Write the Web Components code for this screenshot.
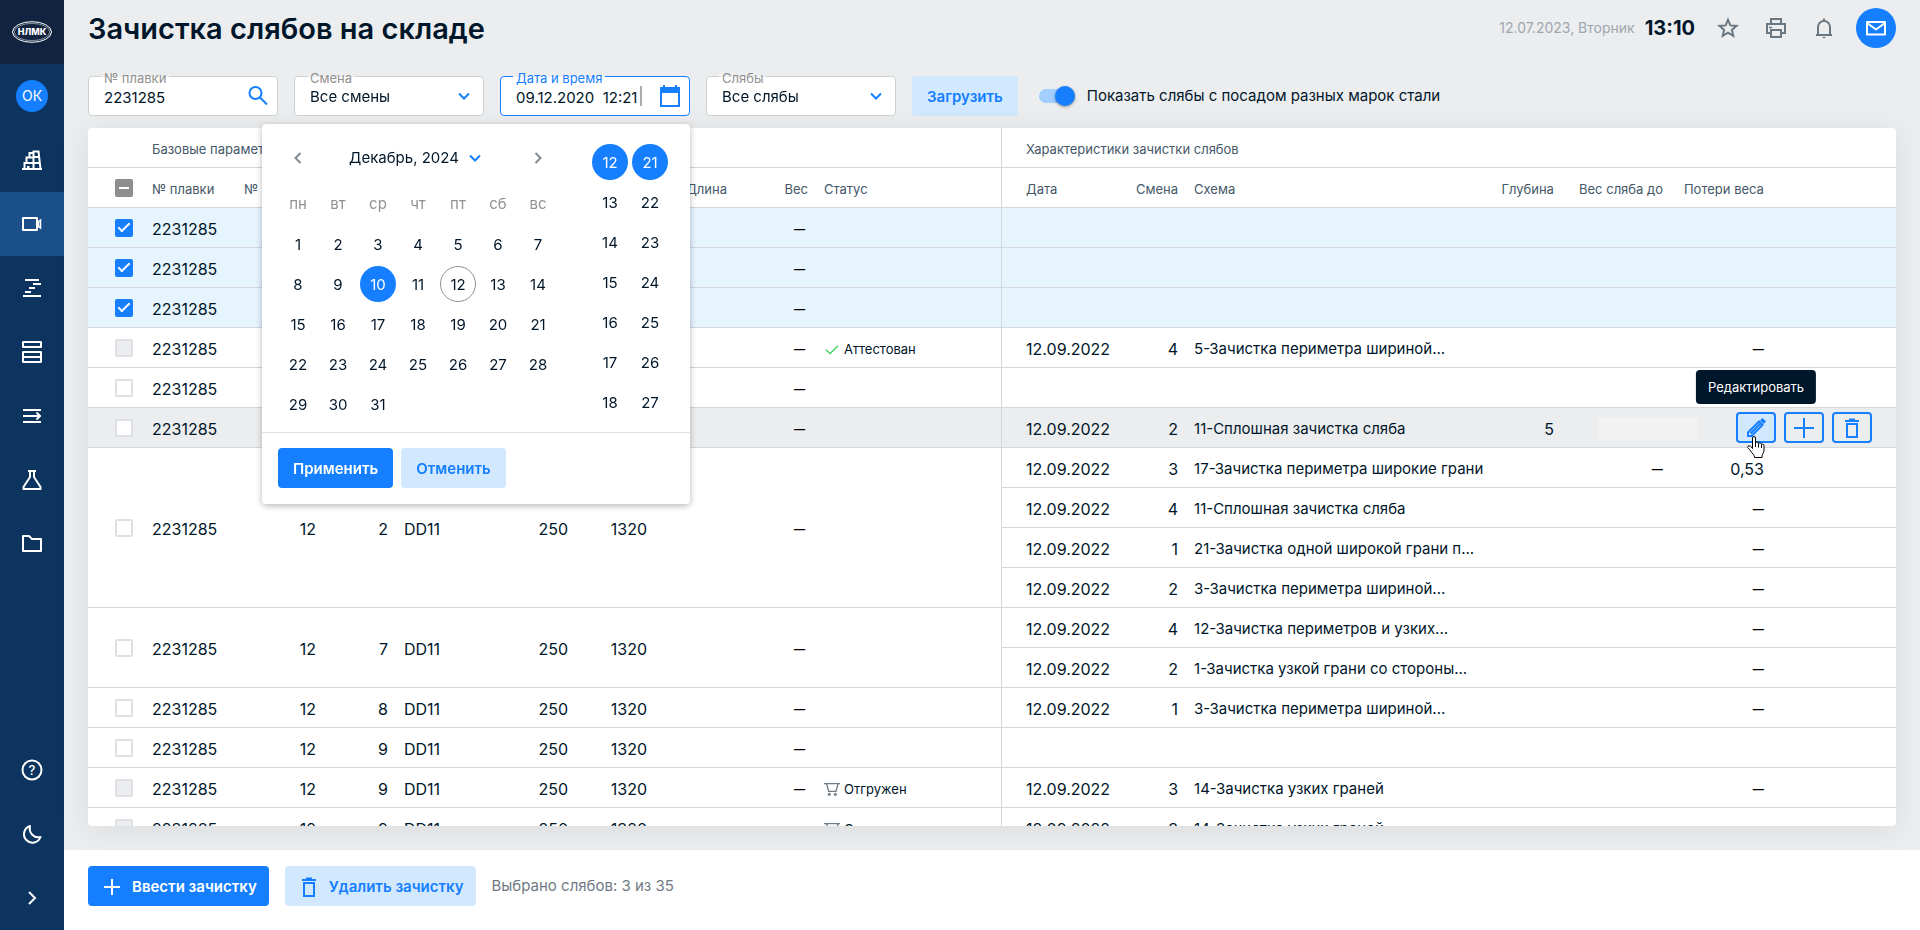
<!DOCTYPE html>
<html lang="ru">
<head>
<meta charset="utf-8">
<meta name="viewport" content="width=device-width, initial-scale=1">
<title>Зачистка слябов на складе</title>
<style>
  :root {
    --ink: #00162a;
    --muted: #919191;
    --head: #455868;
    --blue: #157fff;
    --blue-soft: #d1e8ff;
    --page: #ecedef;
    --line: #d5d8da;
    --sans: Inter, "Noto Sans", sans-serif;
  }
  body {
    margin: 0;
    background: var(--page);
    color: var(--ink);
    font: 15px/20px var(--sans);
  }
</style>
</head>
<body>
<app-shell>
  <nav-rail slot="nav"></nav-rail>
  <page-header heading="Зачистка слябов на складе" date="12.07.2023, Вторник" time="13:10"></page-header>
  <filter-bar></filter-bar>
  <slab-table></slab-table>
  <action-bar slot="footer">
    <ui-button icon="plus">Ввести зачистку</ui-button>
    <ui-button icon="trash" kind="soft">Удалить зачистку</ui-button>
    <span slot="note">Выбрано слябов: 3 из 35</span>
  </action-bar>
</app-shell>

<script>
const ICONS = {
  star: '<path d="M12 3.8l2.4 5.6 6.1.5-4.6 4 1.4 6L12 16.7l-5.3 3.2 1.4-6-4.6-4 6.1-.5z" stroke-linejoin="miter"/>',
  print: '<path d="M7 8V3h10v5M6.500 17H3V8h18v9h-3.500M7 14h10v7H7z"/><path d="M5 11.500h3" stroke-width="1.500"/>',
  bell: '<path d="M4 19h16M6 19v-8a6 6 0 0 1 12 0v8M12 5V2.500"/><path d="M10 21h4l-2 1.500z" fill="currentColor" stroke="none"/>',
  mail: '<path d="M3 6h18v12.500H3zM3 7l9 6.500L21 7" stroke-linejoin="round"/>',
  search: '<circle cx="9.500" cy="9" r="6"/><path d="M14 13.500l7 7"/>',
  down: '<path d="M7 9.500l5 5 5-5"/>',
  left: '<path d="M14.500 7l-5 5 5 5"/>',
  right: '<path d="M9.500 7l5 5-5 5"/>',
  expand: '<path d="M9 6l6 6-6 6"/>',
  calendar: '<path d="M3 6h18v16H3z"/><path d="M2 3h20v6H2zM5 1h2v3H5zM17 1h2v3h-2z" fill="currentColor" stroke="none"/>',
  plus: '<path d="M12 4v16M4 12h16"/>',
  cross: '<path d="M12 2v20M2 12h20"/>',
  trash: '<path d="M7 8h10v13H7zM5 5h14M9 3.500h6"/>',
  pencil: '<path d="M4 20v-3.500L15 5.500l3.500 3.500L7.500 20zM6.500 17.500l10-10"/><path d="M16 4.500L18.500 2 22 5.500 19.500 8z" fill="currentColor" stroke="none"/>',
  check: '<path d="M3 13l6 6L21 7"/>',
  cart: '<path d="M0 4h24M4 4.500L7 15.500h11L21 4.500"/><circle cx="8" cy="20" r="1.500"/><circle cx="17" cy="20" r="1.500"/>',
  plant: '<path d="M2 21h20M4.500 21v-6h9M6.500 15V9.500h7M9.500 9.500V5h4M13.500 21V3.500h5L20.500 21M13.500 9h6M13.500 15h6.500"/><path d="M7 18h2.500v3H7z" fill="currentColor" stroke="none"/>',
  camera: '<path d="M3 6h14v12H3z" stroke-linejoin="round"/><path d="M18.500 9.500l2-1.500v8l-2-1.500z" stroke-width="1.500"/>',
  gantt: '<path d="M5 4h14M13 8h8M9 12h6M5 16h6M3 20h18"/>',
  layers: '<path d="M3 2h18v5H3zM3 12h18v10H3zM3 17h18" stroke-linejoin="round"/>',
  flow: '<path d="M3 6h18M3 12h17M3 18h18M16.500 8.500L20 12l-3.500 3.500"/>',
  flask: '<path d="M8 3h8M10 3v6L3.500 19v2h17v-2L14 9V3" stroke-linejoin="round"/>',
  folder: '<path d="M3 4h6l3 3h9v12H3z" stroke-linejoin="round"/>',
  help: '<circle cx="12" cy="12" r="9.500"/><text x="12" y="16.500" text-anchor="middle" font-size="13" font-family="Inter, sans-serif" font-weight="500" fill="currentColor" stroke="none">?</text>',
  moon: '<path d="M10 4a8.500 8.500 0 1 0 10.500 11C14 16.500 8.500 11 10 4z" stroke-linejoin="round"/>'
};

function define(name, markup, setup) {
  const template = document.createElement('template');
  customElements.define(name, class extends HTMLElement {
    connectedCallback() {
      if (this.shadowRoot) return;
      const root = this.attachShadow({ mode: 'open' });
      template.innerHTML = typeof markup === 'function' ? markup(this) : markup;
      root.append(template.content.cloneNode(true));
      if (setup) setup(root, this);
    }
  });
}

define('ui-icon', el => `
  <style>
    :host { display: inline-flex; width: 24px; height: 24px; flex: none; }
    svg { width: 100%; height: 100%; fill: none; stroke: currentColor; stroke-width: 2; }
  </style>
  <svg viewBox="0 0 24 24" aria-hidden="true">${ICONS[el.getAttribute('name')]}</svg>`);

define('ui-button', el => `
  <style>
    :host { display: inline-flex; }
    button {
      display: flex; align-items: center; gap: 8px; height: 40px; padding: 1px 15px 0;
      border: 0; border-radius: 4px; background: var(--blue); color: #fff;
      font: 600 15px/20px var(--sans); white-space: nowrap; cursor: pointer;
    }
    button.soft { background: var(--blue-soft); color: var(--blue); }
    button.with-icon { padding: 1px 12px 0; }
  </style>
  <button type="button" class="${el.getAttribute('kind') || ''} ${el.hasAttribute('icon') ? 'with-icon' : ''}">
    ${el.hasAttribute('icon') ? `<ui-icon name="${el.getAttribute('icon')}"></ui-icon>` : ''}<slot></slot>
  </button>`);

define('app-shell', `
  <style>
    :host { display: grid; grid-template: "nav main" minmax(0, 1fr) "nav foot" auto / 64px minmax(0, 1fr); height: 100vh; }
    .nav { grid-area: nav; display: grid; }
    main { grid-area: main; display: flex; flex-direction: column; min-height: 0; padding: 0 24px 24px; }
    .foot { grid-area: foot; }
  </style>
  <div class="nav"><slot name="nav"></slot></div>
  <main><slot></slot></main>
  <div class="foot"><slot name="footer"></slot></div>`);

define('nav-rail', `
  <style>
    :host { display: flex; flex-direction: column; background: #0c345f; color: #fff; }
    nav { display: flex; flex-direction: column; flex: 1; }
    a, .logo, .user { display: flex; align-items: center; justify-content: center; height: 64px; color: inherit; text-decoration: none; }
    .logo { background: #12233f; }
    .user span {
      display: grid; place-items: center; width: 32px; height: 32px;
      border-radius: 50%; background: var(--blue); font-size: 14px;
    }
    .active { background: #1a4f8a; }
    .gap { flex: 1; }
  </style>
  <a class="logo" href="#" aria-label="НЛМК">
    <svg width="40" height="22" viewBox="0 0 40 22" fill="none" stroke="#fff">
      <ellipse cx="20" cy="11" rx="19.500" ry="10.300"/>
      <ellipse cx="20" cy="11" rx="17.800" ry="8.600" stroke-width=".5"/>
      <text x="20" y="14" text-anchor="middle" font-family="Inter, sans-serif" font-weight="800" font-size="9" fill="#fff" stroke="none">НЛМК</text>
    </svg>
  </a>
  <div class="user"><span>ОК</span></div>
  <nav aria-label="Разделы">
    <a href="#" aria-label="Производство"><ui-icon name="plant"></ui-icon></a>
    <a href="#" aria-label="Видео" class="active"><ui-icon name="camera"></ui-icon></a>
    <a href="#" aria-label="График"><ui-icon name="gantt"></ui-icon></a>
    <a href="#" aria-label="Склад"><ui-icon name="layers"></ui-icon></a>
    <a href="#" aria-label="Маршруты"><ui-icon name="flow"></ui-icon></a>
    <a href="#" aria-label="Лаборатория"><ui-icon name="flask"></ui-icon></a>
    <a href="#" aria-label="Документы"><ui-icon name="folder"></ui-icon></a>
    <span class="gap"></span>
    <a href="#" aria-label="Справка"><ui-icon name="help"></ui-icon></a>
    <a href="#" aria-label="Тёмная тема"><ui-icon name="moon"></ui-icon></a>
    <a href="#" aria-label="Развернуть"><ui-icon name="expand"></ui-icon></a>
  </nav>`);

define('page-header', el => `
  <style>
    :host { display: flex; align-items: center; height: 56px; flex: none; }
    h1 { flex: 1; margin: 0; padding-top: 2px; font: 600 29px/40px var(--sans); }
    .date { font-size: 14px; color: #9ea7ae; }
    time { margin: 0 21px 0 10px; font: 700 20px/24px var(--sans); }
    button { display: grid; place-items: center; padding: 0; border: 0; background: none; color: #6a7883; cursor: pointer; }
    .tools { display: flex; align-items: center; gap: 24px; }
    .mail { width: 40px; height: 40px; margin-left: 20px; border-radius: 50%; background: var(--blue); color: #fff; }
  </style>
  <h1>${el.getAttribute('heading')}</h1>
  <span class="date">${el.getAttribute('date')}</span>
  <time>${el.getAttribute('time')}</time>
  <div class="tools">
    <button type="button" aria-label="Избранное"><ui-icon name="star"></ui-icon></button>
    <button type="button" aria-label="Печать"><ui-icon name="print"></ui-icon></button>
    <button type="button" aria-label="Уведомления"><ui-icon name="bell"></ui-icon></button>
  </div>
  <button type="button" class="mail" aria-label="Сообщения"><ui-icon name="mail"></ui-icon></button>`);

function fieldControl(el) {
  const value = el.getAttribute('value');
  switch (el.getAttribute('type')) {
    case 'select':
      return `<select id="control"><option>${value}</option></select><ui-icon name="down"></ui-icon>`;
    case 'date':
      return `<input id="control" class="date" type="text" value="${value}"><span class="caret"></span><ui-icon name="calendar"></ui-icon>`;
    default:
      return `<input id="control" type="text" value="${value}"><ui-icon name="search"></ui-icon>`;
  }
}

define('filter-field', el => `
  <style>
    :host { display: block; position: relative; width: 190px; }
    .box {
      display: flex; align-items: center; box-sizing: border-box; height: 40px; padding: 0 7px 0 15px;
      border: 1px solid #ccd1d4; border-radius: 4px; background: #fff;
    }
    label {
      position: absolute; left: 13px; top: -8px; padding: 0 3px; font-size: 13px; line-height: 20px;
      color: var(--muted); background: linear-gradient(var(--page) 0 9px, #fff 9px);
    }
    input, select {
      flex: 1; min-width: 0; height: 26px; margin: 0; padding: 2px 0 0; border: 0; outline: 0; background: none;
      box-sizing: border-box; appearance: none; color: var(--ink); font: 15px/24px var(--sans);
    }
    ui-icon { color: var(--blue); pointer-events: none; }
    .date { flex: none; width: 124px; }
    .caret { width: 2px; height: 20px; margin-right: auto; background: #a8acb0; }
    :host([focused]) .box { border-color: var(--blue); }
    :host([focused]) label { color: var(--blue); }
  </style>
  <div class="box">${fieldControl(el)}</div>
  <label for="control">${el.getAttribute('label')}</label>
  <slot></slot>`);

define('date-picker', () => {
  const names = ['пн', 'вт', 'ср', 'чт', 'пт', 'сб', 'вс'];
  const state = { 10: 'picked', 12: 'today' };
  const days = Array.from({ length: 31 }, (_, i) => i + 1);
  const weeks = [];
  while (days.length) weeks.push(days.splice(0, 7));
  const column = (from, label) => `<div class="times" role="group" aria-label="${label}">` +
    Array.from({ length: 7 }, (_, i) => `<button type="button" class="cell ${i ? '' : 'picked'}">${from + i}</button>`).join('') + '</div>';
  return `
  <style>
    :host {
      display: block; position: absolute; z-index: 5; right: 0; top: calc(100% + 8px); width: 428px;
      border-radius: 4px; background: #fff; box-shadow: 0 2px 6px rgba(0, 0, 0, .28);
    }
    .body { display: flex; padding: 14px 20px 8px 16px; border-bottom: 1px solid #dfe2e4; }
    .month { display: flex; align-items: center; justify-content: space-between; height: 40px; margin-bottom: 6px; padding: 0 8px; }
    button { padding: 0; border: 0; background: none; color: inherit; font: 15px/20px var(--sans); cursor: pointer; }
    .month button { display: flex; align-items: center; gap: 4px; height: 24px; }
    .step { color: #7f8a93; }
    .pick ui-icon { color: var(--blue); }
    table { border-collapse: collapse; }
    th, td { width: 40px; height: 40px; padding: 0; text-align: center; }
    th { color: var(--muted); font-weight: 400; }
    .cell { box-sizing: border-box; width: 36px; height: 36px; padding-top: 2px; border-radius: 50%; }
    .picked { background: var(--blue); color: #fff; }
    .today { border: 1px solid #919191; }
    .times { display: flex; flex-direction: column; align-items: center; gap: 4px; width: 40px; padding-top: 6px; }
    .calendar { margin-right: auto; }
    .actions { display: flex; gap: 8px; padding: 15px 16px 16px; }
  </style>
  <div class="body">
    <div class="calendar">
      <div class="month">
        <button type="button" class="step" aria-label="Предыдущий месяц"><ui-icon name="left"></ui-icon></button>
        <button type="button" class="pick">Декабрь, 2024<ui-icon name="down"></ui-icon></button>
        <button type="button" class="step" aria-label="Следующий месяц"><ui-icon name="right"></ui-icon></button>
      </div>
      <table>
        <thead><tr>${names.map(n => `<th scope="col">${n}</th>`).join('')}</tr></thead>
        <tbody>${weeks.map(w => `<tr>${w.map(d => `<td><button type="button" class="cell ${state[d] || ''}">${d}</button></td>`).join('')}</tr>`).join('')}</tbody>
      </table>
    </div>
    ${column(12, 'Часы')}${column(21, 'Минуты')}
  </div>
  <div class="actions"><ui-button>Применить</ui-button><ui-button kind="soft">Отменить</ui-button></div>`;
});

define('ui-switch', `
  <style>
    :host { display: inline-flex; }
    label { display: flex; align-items: center; gap: 12px; }
    input { appearance: none; position: relative; width: 36px; height: 14px; margin: 0; border-radius: 7px; background: #a1cfff; }
    input::before {
      content: ""; position: absolute; right: 0; top: -3px; width: 20px; height: 20px; border-radius: 50%;
      background: var(--blue); box-shadow: 0 1px 3px rgba(0, 0, 0, .4);
    }
  </style>
  <label><input type="checkbox" role="switch" checked><slot></slot></label>`);

define('filter-bar', `
  <style>
    :host { display: flex; align-items: center; gap: 16px; flex: none; margin: 20px 0 12px; }
    ui-switch { margin-left: 5px; }
  </style>
  <filter-field label="№ плавки" value="2231285"></filter-field>
  <filter-field label="Смена" type="select" value="Все смены"></filter-field>
  <filter-field label="Дата и время" type="date" value="09.12.2020&nbsp; 12:21" focused><date-picker></date-picker></filter-field>
  <filter-field label="Слябы" type="select" value="Все слябы"></filter-field>
  <ui-button kind="soft">Загрузить</ui-button>
  <ui-switch>Показать слябы с посадом разных марок стали</ui-switch>`);

define('row-actions', `
  <style>
    :host { display: flex; justify-content: flex-end; gap: 8px; }
    button {
      display: grid; place-items: center; width: 40px; height: 31px; padding: 0; border: 2px solid var(--blue);
      border-radius: 4px; background: none; color: var(--blue); cursor: pointer;
    }
    .hovered { position: relative; background: var(--blue-soft); }
    .tip {
      position: absolute; left: 50%; bottom: calc(100% + 10px); transform: translateX(-50%); padding: 7px 12px;
      border-radius: 4px; background: var(--ink); color: #fff; font: 13px/20px var(--sans); white-space: nowrap;
    }
    .pointer { position: absolute; z-index: 1; left: 9px; top: 22px; width: 18px; height: 22px; }
  </style>
  <button type="button" class="hovered" aria-label="Изменить">
    <ui-icon name="pencil"></ui-icon>
    <span class="tip" role="tooltip">Редактировать</span>
    <svg class="pointer" viewBox="0 0 18 22" fill="#fff" stroke="#000" stroke-linejoin="round" aria-hidden="true">
      <path d="M5.500 12.500V2Q5.500 .5 7 .5T8.500 2v5Q8.500 6 10 6t1.500 1.500Q11.500 6.800 13 7t1.500 1.500Q15 7.800 16 8.200t1 1.500V14q0 2-1 3.500t-1 4H7.500q0-2-1.500-3.500T2.500 13.500L.7 11.500Q.5 10 2 9.700t3.500 2.800z"/>
      <path d="M8.500 7v4M11.500 8v3.500M14.500 9v3"/>
    </svg>
  </button>
  <button type="button" aria-label="Добавить"><ui-icon name="cross"></ui-icon></button>
  <button type="button" aria-label="Удалить"><ui-icon name="trash"></ui-icon></button>`);

const D = '12.09.2022';
const NONE = '<span class="none">–</span>';
const SLABS = [
  { state: 'selected' },
  { state: 'selected' },
  { state: 'selected' },
  { state: 'locked', status: ['check', 'Аттестован'], works: [[4, '5-Зачистка периметра шириной...', '', '', NONE]] },
  {},
  { state: 'hover', works: [[2, '11-Сплошная зачистка сляба', 5]] },
  { no: 2, works: [
    [3, '17-Зачистка периметра широкие грани', '', NONE, '0,53'],
    [4, '11-Сплошная зачистка сляба', '', '', NONE],
    [1, '21-Зачистка одной широкой грани п...', '', '', NONE],
    [2, '3-Зачистка периметра шириной...', '', '', NONE]] },
  { no: 7, works: [
    [4, '12-Зачистка периметров и узких...', '', '', NONE],
    [2, '1-Зачистка узкой грани со стороны...', '', '', NONE]] },
  { no: 8, works: [[1, '3-Зачистка периметра шириной...', '', '', NONE]] },
  { no: 9 },
  { no: 9, state: 'locked', status: ['cart', 'Отгружен'], works: [[3, '14-Зачистка узких граней', '', '', NONE]] },
  { no: 9, state: 'locked', status: ['cart', 'Отгружен'], works: [[3, '14-Зачистка узких граней', '', '', NONE]] }
];

function workCells(work, hover) {
  if (!work) return '<td class="date"></td><td></td><td></td><td></td><td></td><td></td><td></td>';
  const [shift, scheme, depth, before, loss] = work;
  const start = `<td class="date">${D}</td><td class="num">${shift}</td><td class="text">${scheme}</td><td class="num">${depth}</td>`;
  return hover
    ? start + '<td class="pending"><span></span></td><td class="tools" colspan="2"><row-actions></row-actions></td>'
    : start + `<td class="num">${before}</td><td class="num">${loss}</td><td></td>`;
}

function slabRows(slab) {
  const works = slab.works || [null];
  const span = works.length > 1 ? ` rowspan="${works.length}"` : '';
  const cell = (cls, text) => `<td class="${cls}"${span}>${text}</td>`;
  const filled = slab.no !== undefined;
  const status = slab.status
    ? `<span class="status ${slab.status[0]}"><ui-icon name="${slab.status[0]}"></ui-icon>${slab.status[1]}</span>` : '';
  const flags = (slab.state === 'selected' ? ' checked' : '') + (slab.state === 'locked' ? ' disabled' : '');
  const base =
    cell('tick', `<input type="checkbox" aria-label="Выбрать сляб"${flags}>`) +
    cell('', '2231285') +
    cell('num', filled ? 12 : '') +
    cell('num', filled ? slab.no : '') +
    cell('', filled ? 'DD11' : '') +
    cell('num', filled ? 250 : '') +
    cell('num', filled ? 1320 : '') +
    cell('', '') +
    cell('num weight', NONE) +
    cell('edge', status);
  return works.map((w, i) =>
    `<tr class="${slab.state || ''}">${i ? '' : base}${workCells(w, slab.state === 'hover')}</tr>`).join('');
}

define('slab-table', () => `
  <style>
    :host {
      display: block; flex: 1; min-height: 0; overflow: auto; scrollbar-width: none; border-radius: 4px;
      background: #fff; box-shadow: 0 4px 32px rgba(0, 0, 0, .08);
    }
    table { width: 100%; table-layout: fixed; border-spacing: 0; }
    th, td {
      box-sizing: border-box; height: 40px; padding: 2px 8px 0; border-bottom: 1px solid var(--line);
      text-align: left; white-space: nowrap; font-weight: 400;
    }
    th { color: var(--head); font-size: 13px; }
    td { font-size: 16px; }
    td.text { padding-right: 0; font-size: 15px; overflow: hidden; text-overflow: ellipsis; }
    .num { text-align: right; }
    td.weight { padding-right: 11px; }
    .none { font: 20px/20px "Liberation Sans", sans-serif; color: #000; }
    .date { padding-left: 24px; }
    .edge { border-right: 1px solid var(--line); }
    th.tick, td.tick { padding: 1px 0 0 27px; font-size: 0; line-height: 0; }
    .selected td { background: #e6f4fe; }
    .hover td { background: var(--page); }
    .hover .tools { padding: 0 24px 0 0; background: none; }
    .hover { background: var(--page); }
    .pending span { display: block; position: relative; height: 24px; margin: 0 -34px 0 28px; background: #f2f2f2; }
    .status { display: flex; align-items: center; gap: 4px; font-size: 13px; }
    .status ui-icon { width: 16px; height: 16px; color: #6f7d88; }
    .status.check ui-icon { color: #37cf5c; }
    input {
      appearance: none; display: inline-grid; place-items: center; box-sizing: border-box; width: 18px; height: 18px;
      margin: 0; border: 2px solid #dde1e5; border-radius: 2px; background: #fff; vertical-align: middle;
    }
    input:disabled { background: #ecedef; }
    input:checked { border-color: var(--blue); background: var(--blue); }
    input:checked::before {
      content: ""; width: 12px; height: 6px; box-sizing: border-box; margin-top: -4px;
      border: solid #fff; border-width: 0 0 2px 2px; transform: rotate(-45deg);
    }
    input:indeterminate { border-color: #8e8e8e; background: #8e8e8e; }
    input:indeterminate::before { content: ""; width: 10px; height: 2px; background: #fff; }
  </style>
  <table>
    <colgroup>
      ${[56, 92, 88, 72, 100, 80, 79, 80, 81, 186, 104, 80, 0, 72, 109, 101, 124].map(w => w ? `<col style="width:${w}px">` : '<col>').join('')}
    </colgroup>
    <thead>
      <tr>
        <th></th><th colspan="9" class="edge" scope="colgroup">Базовые параметры слябов</th>
        <th colspan="7" class="date" scope="colgroup">Характеристики зачистки слябов</th>
      </tr>
      <tr>
        <th class="tick"><input type="checkbox" class="all" aria-label="Выбрать все"></th>
        <th>№ плавки</th><th>№ партии</th><th class="num">№</th><th>Марка</th><th class="num">Толщина</th>
        <th class="num">Ширина</th><th class="num">Длина</th><th class="num">Вес</th><th class="edge">Статус</th>
        <th class="date">Дата</th><th class="num">Смена</th><th>Схема</th><th class="num">Глубина</th>
        <th class="num">Вес сляба до</th><th class="num">Потери веса</th><th></th>
      </tr>
    </thead>
    <tbody>${SLABS.map(slabRows).join('')}</tbody>
  </table>`, root => { root.querySelector('.all').indeterminate = true; });

define('action-bar', `
  <style>
    :host { display: flex; align-items: center; gap: 16px; padding: 16px 24px 24px; background: #fff; }
    slot[name="note"] { color: #6f7a84; }
  </style>
  <slot></slot><slot name="note"></slot>`);
</script>
</body>
</html>
